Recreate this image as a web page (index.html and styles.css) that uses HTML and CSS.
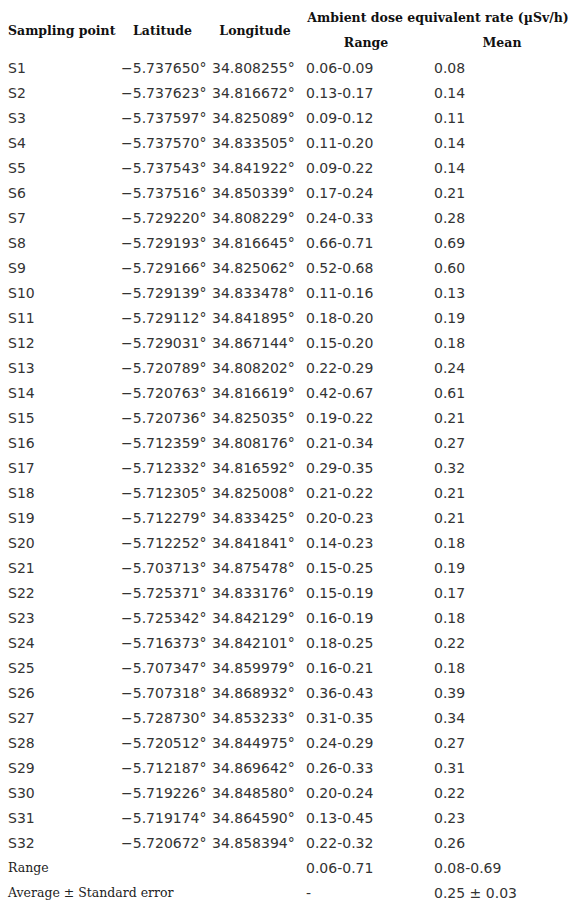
FILE: index.html
```html
<!DOCTYPE html>
<html>
<head>
<meta charset="utf-8">
<link rel="stylesheet" href="styles.css">
</head>
<body>
<table class="dose">
<colgroup>
<col class="c1"><col class="c2"><col class="c3"><col class="c4"><col class="c5">
</colgroup>
<thead>
<tr><th rowspan="2" class="left">Sampling point</th><th rowspan="2">Latitude</th><th rowspan="2">Longitude</th><th colspan="2">Ambient dose equivalent rate (µSv/h)</th></tr>
<tr><th>Range</th><th>Mean</th></tr>
</thead>
<tbody>
<tr><td>S1</td><td>−5.737650°</td><td>34.808255°</td><td>0.06-0.09</td><td>0.08</td></tr>
<tr><td>S2</td><td>−5.737623°</td><td>34.816672°</td><td>0.13-0.17</td><td>0.14</td></tr>
<tr><td>S3</td><td>−5.737597°</td><td>34.825089°</td><td>0.09-0.12</td><td>0.11</td></tr>
<tr><td>S4</td><td>−5.737570°</td><td>34.833505°</td><td>0.11-0.20</td><td>0.14</td></tr>
<tr><td>S5</td><td>−5.737543°</td><td>34.841922°</td><td>0.09-0.22</td><td>0.14</td></tr>
<tr><td>S6</td><td>−5.737516°</td><td>34.850339°</td><td>0.17-0.24</td><td>0.21</td></tr>
<tr><td>S7</td><td>−5.729220°</td><td>34.808229°</td><td>0.24-0.33</td><td>0.28</td></tr>
<tr><td>S8</td><td>−5.729193°</td><td>34.816645°</td><td>0.66-0.71</td><td>0.69</td></tr>
<tr><td>S9</td><td>−5.729166°</td><td>34.825062°</td><td>0.52-0.68</td><td>0.60</td></tr>
<tr><td>S10</td><td>−5.729139°</td><td>34.833478°</td><td>0.11-0.16</td><td>0.13</td></tr>
<tr><td>S11</td><td>−5.729112°</td><td>34.841895°</td><td>0.18-0.20</td><td>0.19</td></tr>
<tr><td>S12</td><td>−5.729031°</td><td>34.867144°</td><td>0.15-0.20</td><td>0.18</td></tr>
<tr><td>S13</td><td>−5.720789°</td><td>34.808202°</td><td>0.22-0.29</td><td>0.24</td></tr>
<tr><td>S14</td><td>−5.720763°</td><td>34.816619°</td><td>0.42-0.67</td><td>0.61</td></tr>
<tr><td>S15</td><td>−5.720736°</td><td>34.825035°</td><td>0.19-0.22</td><td>0.21</td></tr>
<tr><td>S16</td><td>−5.712359°</td><td>34.808176°</td><td>0.21-0.34</td><td>0.27</td></tr>
<tr><td>S17</td><td>−5.712332°</td><td>34.816592°</td><td>0.29-0.35</td><td>0.32</td></tr>
<tr><td>S18</td><td>−5.712305°</td><td>34.825008°</td><td>0.21-0.22</td><td>0.21</td></tr>
<tr><td>S19</td><td>−5.712279°</td><td>34.833425°</td><td>0.20-0.23</td><td>0.21</td></tr>
<tr><td>S20</td><td>−5.712252°</td><td>34.841841°</td><td>0.14-0.23</td><td>0.18</td></tr>
<tr><td>S21</td><td>−5.703713°</td><td>34.875478°</td><td>0.15-0.25</td><td>0.19</td></tr>
<tr><td>S22</td><td>−5.725371°</td><td>34.833176°</td><td>0.15-0.19</td><td>0.17</td></tr>
<tr><td>S23</td><td>−5.725342°</td><td>34.842129°</td><td>0.16-0.19</td><td>0.18</td></tr>
<tr><td>S24</td><td>−5.716373°</td><td>34.842101°</td><td>0.18-0.25</td><td>0.22</td></tr>
<tr><td>S25</td><td>−5.707347°</td><td>34.859979°</td><td>0.16-0.21</td><td>0.18</td></tr>
<tr><td>S26</td><td>−5.707318°</td><td>34.868932°</td><td>0.36-0.43</td><td>0.39</td></tr>
<tr><td>S27</td><td>−5.728730°</td><td>34.853233°</td><td>0.31-0.35</td><td>0.34</td></tr>
<tr><td>S28</td><td>−5.720512°</td><td>34.844975°</td><td>0.24-0.29</td><td>0.27</td></tr>
<tr><td>S29</td><td>−5.712187°</td><td>34.869642°</td><td>0.26-0.33</td><td>0.31</td></tr>
<tr><td>S30</td><td>−5.719226°</td><td>34.848580°</td><td>0.20-0.24</td><td>0.22</td></tr>
<tr><td>S31</td><td>−5.719174°</td><td>34.864590°</td><td>0.13-0.45</td><td>0.23</td></tr>
<tr><td>S32</td><td>−5.720672°</td><td>34.858394°</td><td>0.22-0.32</td><td>0.26</td></tr>
<tr><td class="label" colspan="3">Range</td><td>0.06-0.71</td><td>0.08-0.69</td></tr>
<tr><td class="label" colspan="3">Average ± Standard error</td><td>-</td><td>0.25 ± 0.03</td></tr>
</tbody>
</table>
</body>
</html>
```
FILE: styles.css
```css
html, body {
  margin: 0;
  padding: 0;
  background: #fff;
}
body {
  padding: 5px 4px 0 4px;
  color: #000;
}
.dose {
  border-collapse: collapse;
  table-layout: fixed;
  width: 570px;
}
.c1 { width: 113px; }
.c2 { width: 91px; }
.c3 { width: 94px; }
.c4 { width: 128px; }
.c5 { width: 144px; }
.dose th,
.dose td {
  height: 25px;
  padding: 0 4px;
  box-sizing: border-box;
  white-space: nowrap;
  vertical-align: middle;
}
.dose th {
  font-family: "DejaVu Serif", serif;
  font-weight: bold;
  font-size: 12.5px;
  text-align: center;
  color: #111;
}
.dose th.left {
  text-align: left;
}
.dose td {
  font-family: "DejaVu Sans", sans-serif;
  font-size: 14px;
  text-align: left;
  color: #333;
}
.dose td.label {
  font-family: "DejaVu Serif", serif;
  font-size: 12.5px;
  color: #222;
}
```
